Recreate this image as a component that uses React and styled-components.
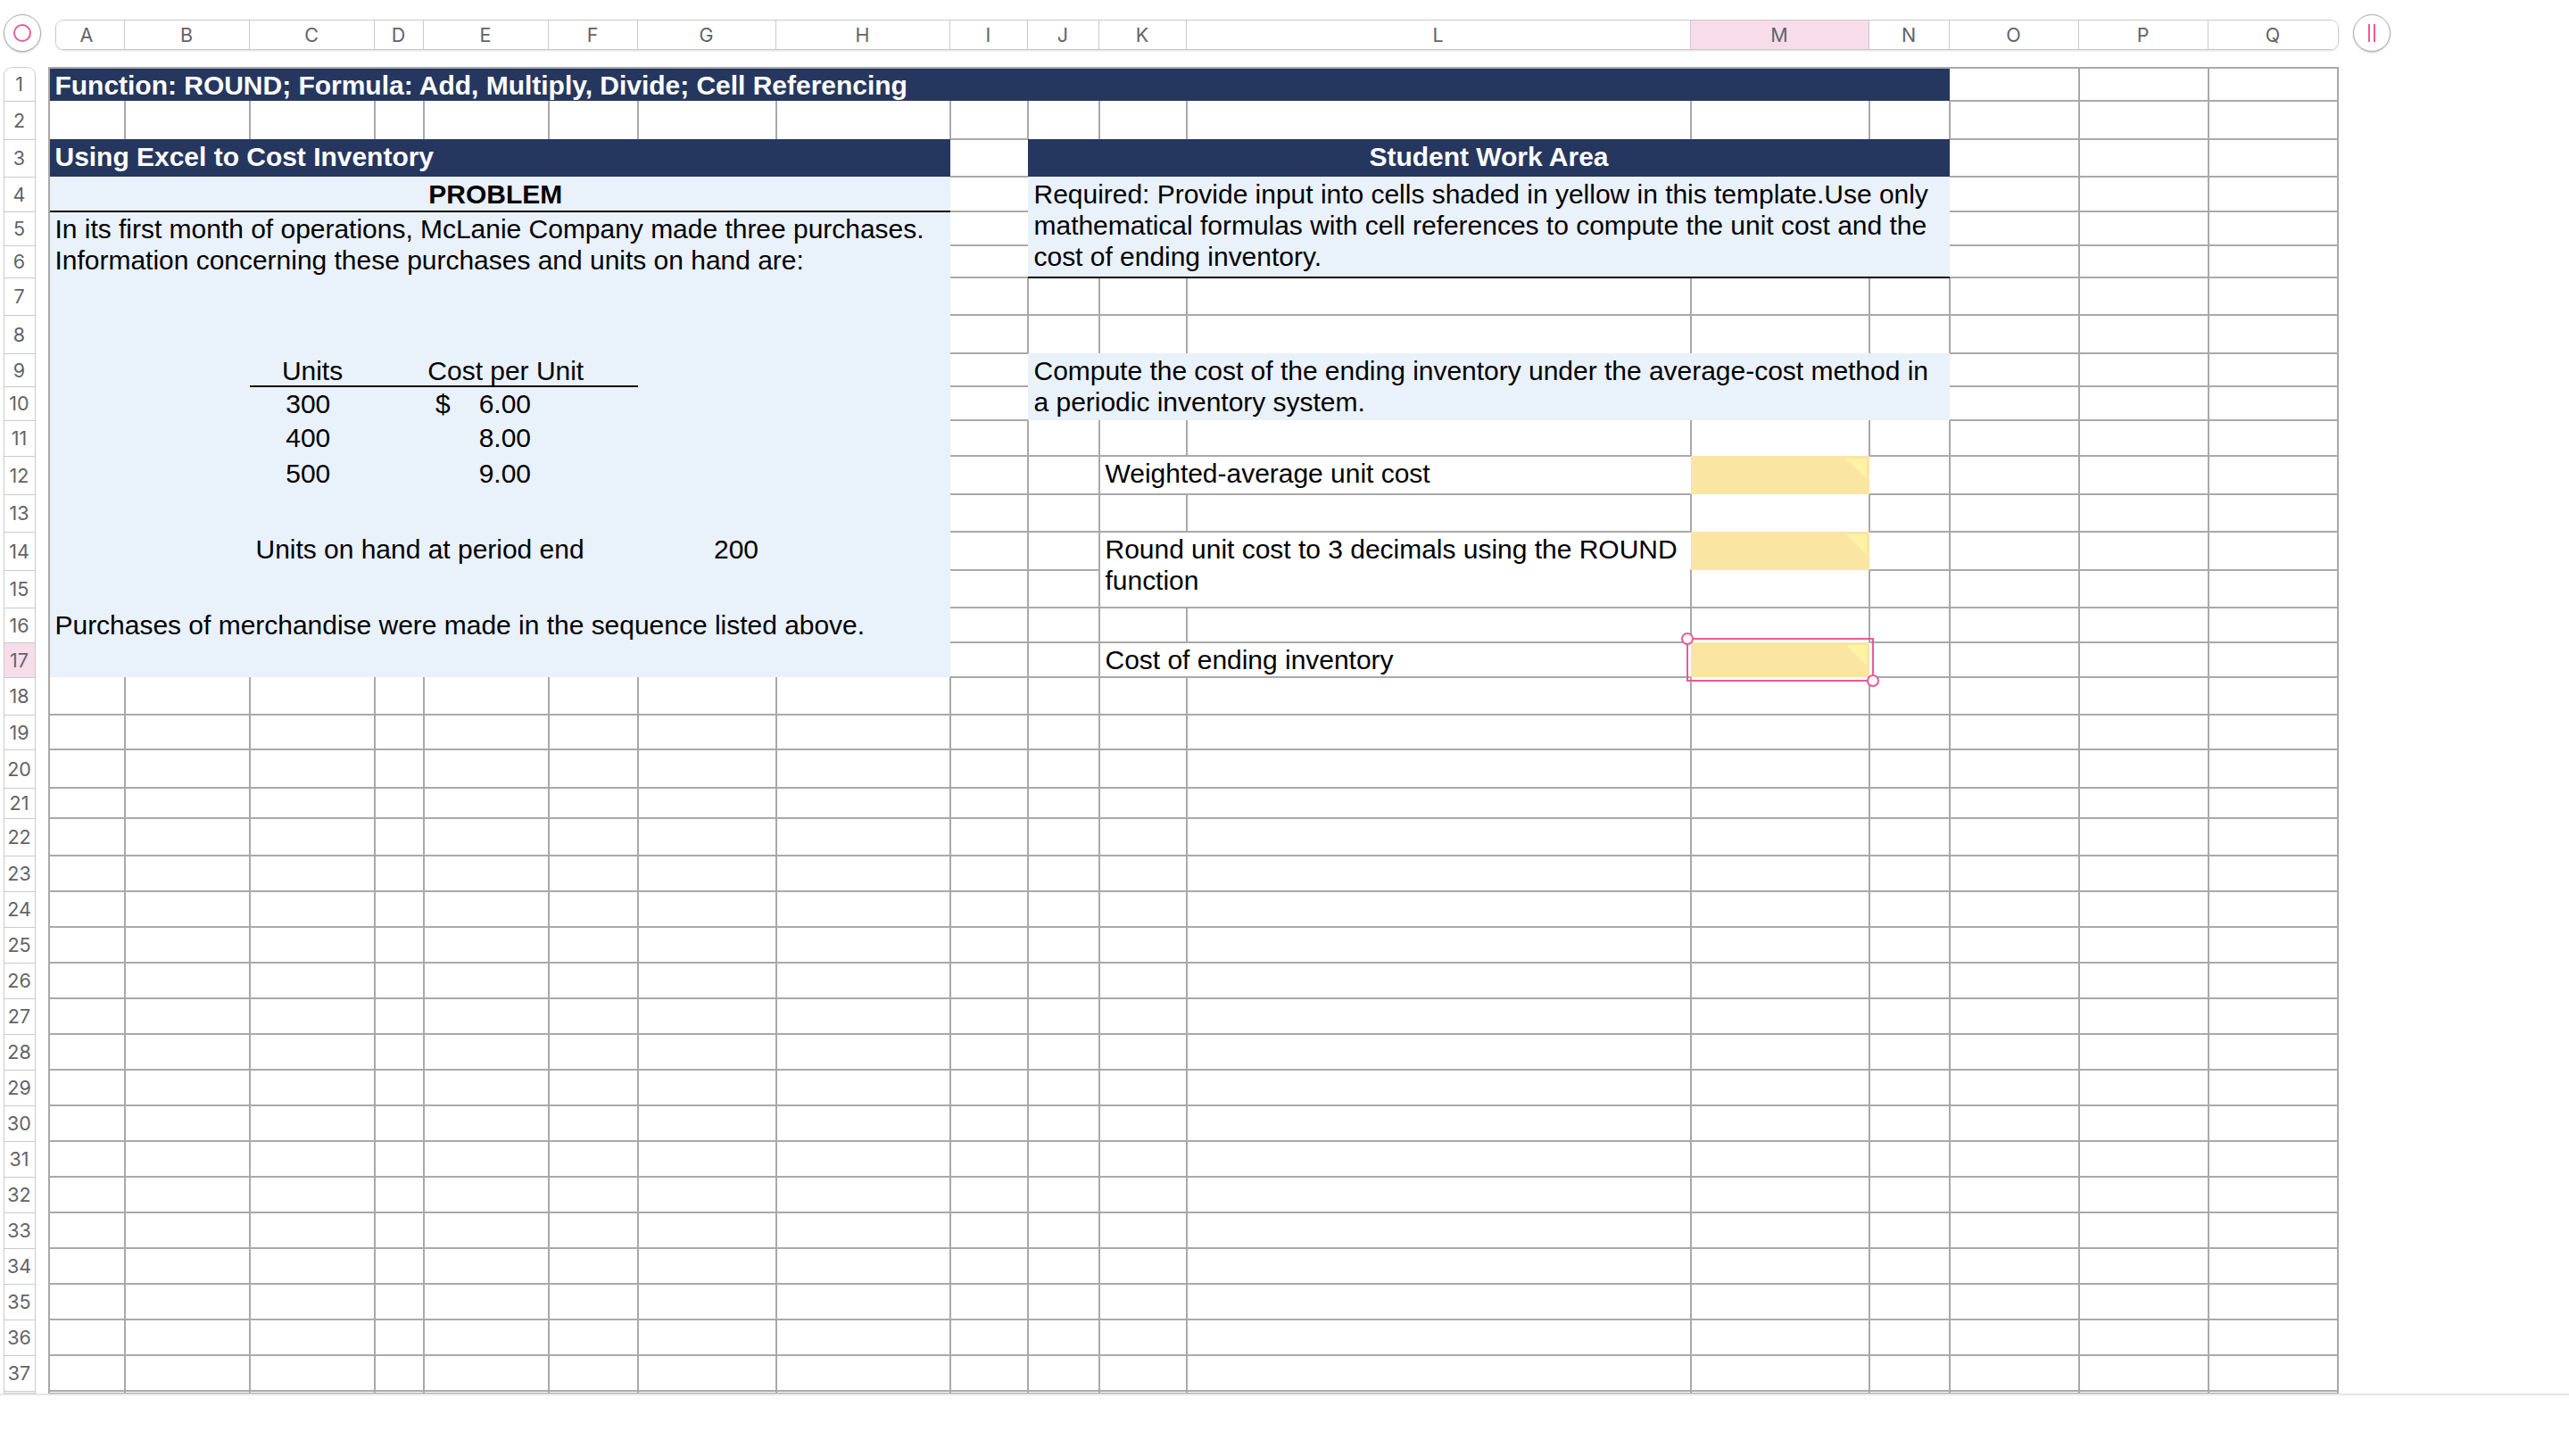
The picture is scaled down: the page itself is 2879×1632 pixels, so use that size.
import React from "react";
import styled, { createGlobalStyle, css } from "styled-components";

// ############################################################
// THEME
// ############################################################
const colours = {
  navy: "#26375f",
  lightBlue: "#e9f1fb",
  yellow: "#fbe5a2",
  note: "#fdf3a3",
  pink: "#e55b9c",
  pinkLight: "#f7dcea",
  grid: "#a9a9a9",
  headerBorder: "#cacaca",
  headerText: "#636366",
  footerLine: "#e5e5e5"
};

const GlobalStyle = createGlobalStyle`
  * {
    box-sizing: border-box;
  }

  body {
    margin: 0;
    background-color: #fff;
    font-family: "Liberation Sans", Helvetica, Arial, sans-serif;
  }
`;

// ############################################################
// SHEET DATA
// ############################################################
const columns = [
  ["A", 85],
  ["B", 140],
  ["C", 140],
  ["D", 55],
  ["E", 140],
  ["F", 100],
  ["G", 155],
  ["H", 195],
  ["I", 87],
  ["J", 80],
  ["K", 98],
  ["L", 565],
  ["M", 200],
  ["N", 90],
  ["O", 145],
  ["P", 145],
  ["Q", 145]
];

const rowHeights = [
  37, 43, 42, 39, 38, 36, 42, 43, 37, 38, 40, 43, 42, 43, 42, 39, 39, 42, 39,
  43, 34, 42, ...Array(16).fill(40)
];

const SELECTED_COLUMN = "M";
const SELECTED_ROW = 17;

// filled or merged blocks, no grid lines are drawn inside them
const blocks = [
  { range: "A1:N1", fill: "navy", bold: true, text: "Function: ROUND; Formula: Add, Multiply, Divide; Cell Referencing" },
  { range: "A3:H3", fill: "navy", bold: true, text: "Using Excel to Cost Inventory" },
  { range: "J3:N3", fill: "navy", bold: true, align: "center", text: "Student Work Area" },
  { range: "A4:H17", fill: "lightBlue" },
  {
    range: "J4:N6",
    fill: "lightBlue",
    underline: true,
    text: [
      "Required: Provide input into cells shaded in yellow in this template.Use only",
      "mathematical formulas with cell references to compute the unit cost and the",
      "cost of ending inventory."
    ]
  },
  {
    range: "J9:N10",
    fill: "lightBlue",
    text: [
      "Compute the cost of the ending inventory under the average-cost method in",
      "a periodic inventory system."
    ]
  },
  { range: "K12:L12", outlined: true, text: "Weighted-average unit cost" },
  {
    range: "K14:L15",
    outlined: true,
    text: ["Round unit cost to 3 decimals using the ROUND", "function"]
  },
  { range: "K17:L17", outlined: true, text: "Cost of ending inventory" },
  { range: "M12:M12", fill: "yellow", note: true },
  { range: "M14:M14", fill: "yellow", note: true },
  { range: "M17:M17", fill: "yellow", note: true, selected: true }
];

// text that sits on top of the problem block
const problemCells = [
  { range: "A4:H4", bold: true, align: "center", padRight: 16, underline: true, text: "PROBLEM" },
  {
    range: "A5:H6",
    text: [
      "In its first month of operations, McLanie Company made three purchases.",
      "Information concerning these purchases and units on hand are:"
    ]
  },
  { range: "C9:F9", underline: true },
  { range: "C9:C9", align: "center", text: "Units" },
  { range: "D9:F9", align: "center", padRight: 8, text: "Cost per Unit" },
  { range: "C10:C10", align: "center", padRight: 16, text: "300" },
  { range: "E10:E10", padLeft: 13, text: "$" },
  { range: "E10:E10", align: "right", padRight: 20, text: "6.00" },
  { range: "C11:C11", align: "center", padRight: 16, text: "400" },
  { range: "E11:E11", align: "right", padRight: 20, text: "8.00" },
  { range: "C12:C12", align: "center", padRight: 16, text: "500" },
  { range: "E12:E12", align: "right", padRight: 20, text: "9.00" },
  { range: "C14:F14", text: "Units on hand at period end" },
  { range: "G14:G14", align: "right", padRight: 20, text: "200" },
  { range: "A16:H16", text: "Purchases of merchandise were made in the sequence listed above." }
];

function parseRange(range) {
  const [from, to] = range.split(":").map(ref => ({
    col: ref.charCodeAt(0) - 64,
    row: Number(ref.slice(1))
  }));
  return { from, to };
}

function gridArea(range) {
  const { from, to } = parseRange(range);
  return `${from.row} / ${from.col} / ${to.row + 1} / ${to.col + 1}`;
}

function cellCount(range) {
  const { from, to } = parseRange(range);
  return (to.row - from.row + 1) * (to.col - from.col + 1);
}

const emptyCellCount =
  columns.length * rowHeights.length -
  blocks.reduce((total, block) => total + cellCount(block.range), 0);

// ############################################################
// HEADERS
// ############################################################
const TopBar = styled.div`
  display: flex;
  align-items: flex-start;
  height: 75px;
  padding: 16px 0 0 4px;
`;

const RoundButton = styled.div`
  display: flex;
  align-items: center;
  justify-content: center;
  gap: 4px;
  flex: none;
  width: 42px;
  height: 42px;
  border: 1px solid #adadad;
  border-radius: 50%;
  background-color: #fff;
  box-shadow: 0 1px 2px rgba(0, 0, 0, 0.22);
`;

const Ring = styled.div`
  width: 20px;
  height: 20px;
  border: 2px solid ${colours.pink};
  border-radius: 50%;
`;

const Bar = styled.div`
  width: 2px;
  height: 20px;
  background-color: ${colours.pink};
`;

const headerText = css`
  font-family: Inter, "Liberation Sans", sans-serif;
  font-size: 21.5px;
  color: ${colours.headerText};
`;

const ColumnHeader = styled.div`
  display: flex;
  flex: none;
  width: 2559px;
  height: 34px;
  margin: 6px 16px 0;
  border: 1px solid ${colours.headerBorder};
  border-radius: 9px;
  box-shadow: 0 1px 2px rgba(0, 0, 0, 0.14);
  overflow: hidden;
  ${headerText}
`;

const ColumnLabel = styled.div`
  display: flex;
  align-items: center;
  justify-content: center;
  flex: none;
  width: ${({ $width }) => $width}px;
  padding-right: 1px;
  border-right: 1px solid ${colours.headerBorder};
  background-color: ${({ $selected }) => ($selected ? colours.pinkLight : "#fff")};

  /* the bar starts a little right of the first column */
  &:first-child {
    width: 77px;
    padding-right: 8px;
  }

  &:last-child {
    border-right: none;
  }
`;

const RowHeader = styled.div`
  flex: none;
  width: 36px;
  border: 1px solid ${colours.headerBorder};
  border-top: none;
  border-radius: 9px 9px 0 0;
  overflow: hidden;
  ${headerText}
`;

const RowLabel = styled.div`
  display: flex;
  align-items: center;
  justify-content: center;
  height: ${({ $height }) => $height}px;
  padding-bottom: 1px;
  padding-right: 1px;
  border-top: 1px solid ${colours.headerBorder};
  background-color: ${({ $selected }) => ($selected ? colours.pinkLight : "#fff")};

  &:first-child {
    height: 38px;
    border-radius: 9px 9px 0 0;
  }
`;

// ############################################################
// CELLS
// ############################################################
const Viewport = styled.div`
  display: flex;
  height: 1489px;
  padding-left: 4px;
  border-bottom: 2px solid ${colours.footerLine};
  overflow: hidden;
`;

const Grid = styled.div`
  position: relative;
  display: grid;
  flex: none;
  grid-template-columns: ${columns.map(([, width]) => `${width}px`).join(" ")};
  grid-template-rows: ${rowHeights.map(height => `${height}px`).join(" ")};
  margin: 1px 0 0 15px;
  font-size: 30px;
  line-height: 35px;
  letter-spacing: -0.02px;

  /* outer frame stays above the filled cells */
  &::after {
    content: "";
    position: absolute;
    inset: -1px;
    border: 2px solid ${colours.grid};
    z-index: 2;
  }
`;

// neighbouring shadows add up to one 2px line
const EmptyCell = styled.div`
  box-shadow: 0 0 0 1px ${colours.grid};
`;

const Block = styled.div`
  grid-area: ${({ $range }) => gridArea($range)};
  position: relative;
  padding: 2px ${({ $padRight = 6.5 }) => $padRight}px 0 ${({ $padLeft = 6.5 }) => $padLeft}px;
  color: ${({ $fill }) => ($fill === "navy" ? "#fff" : "#000")};
  background-color: ${({ $fill }) => ($fill ? colours[$fill] : "transparent")};
  font-weight: ${({ $bold }) => ($bold ? "bold" : "normal")};
  text-align: ${({ $align = "left" }) => $align};
  white-space: nowrap;

  ${({ $outlined }) =>
    $outlined &&
    css`
      box-shadow: 0 0 0 1px ${colours.grid};
    `}

  ${({ $underline }) =>
    $underline &&
    css`
      box-shadow: inset 0 -1px 0 #000, 0 1px 0 #000;
      z-index: 1;
    `}
`;

const Note = styled.div`
  position: absolute;
  top: 3px;
  right: 3px;
  width: 23px;
  height: 23px;
  background-color: ${colours.note};
  clip-path: polygon(0 0, 100% 0, 100% 100%);
`;

const Selection = styled.div`
  position: absolute;
  inset: -5px;
  border: 2px solid ${colours.pink};
`;

const Handle = styled.div`
  position: absolute;
  width: 14px;
  height: 14px;
  border: 2px solid ${colours.pink};
  border-radius: 50%;
  background-color: #fff;
  ${({ $end }) => ($end ? "right: -8px; bottom: -8px;" : "left: -8px; top: -8px;")}
`;

function SheetBlock({ block }) {
  const lines = [].concat(block.text || []);

  return (
    <Block
      $range={block.range}
      $fill={block.fill}
      $bold={block.bold}
      $align={block.align}
      $padLeft={block.padLeft}
      $padRight={block.padRight}
      $outlined={block.outlined}
      $underline={block.underline}
    >
      {lines.map(line => (
        <div key={line}>{line}</div>
      ))}
      {block.note && <Note />}
      {block.selected && (
        <Selection>
          <Handle />
          <Handle $end />
        </Selection>
      )}
    </Block>
  );
}

export default function App() {
  return (
    <>
      <GlobalStyle />
      <TopBar>
        <RoundButton>
          <Ring />
        </RoundButton>
        <ColumnHeader>
          {columns.map(([name, width]) => (
            <ColumnLabel key={name} $width={width} $selected={name === SELECTED_COLUMN}>
              {name}
            </ColumnLabel>
          ))}
        </ColumnHeader>
        <RoundButton>
          <Bar />
          <Bar />
        </RoundButton>
      </TopBar>
      <Viewport>
        <RowHeader>
          {rowHeights.map((height, i) => (
            <RowLabel key={i} $height={height} $selected={i + 1 === SELECTED_ROW}>
              {i < 37 && i + 1}
            </RowLabel>
          ))}
        </RowHeader>
        <Grid>
          {/* empty cells flow around the placed blocks */}
          {Array.from({ length: emptyCellCount }, (_, i) => (
            <EmptyCell key={i} />
          ))}
          {blocks.map(block => (
            <SheetBlock key={block.range} block={block} />
          ))}
          {problemCells.map((block, i) => (
            <SheetBlock key={i} block={block} />
          ))}
        </Grid>
      </Viewport>
    </>
  );
}
